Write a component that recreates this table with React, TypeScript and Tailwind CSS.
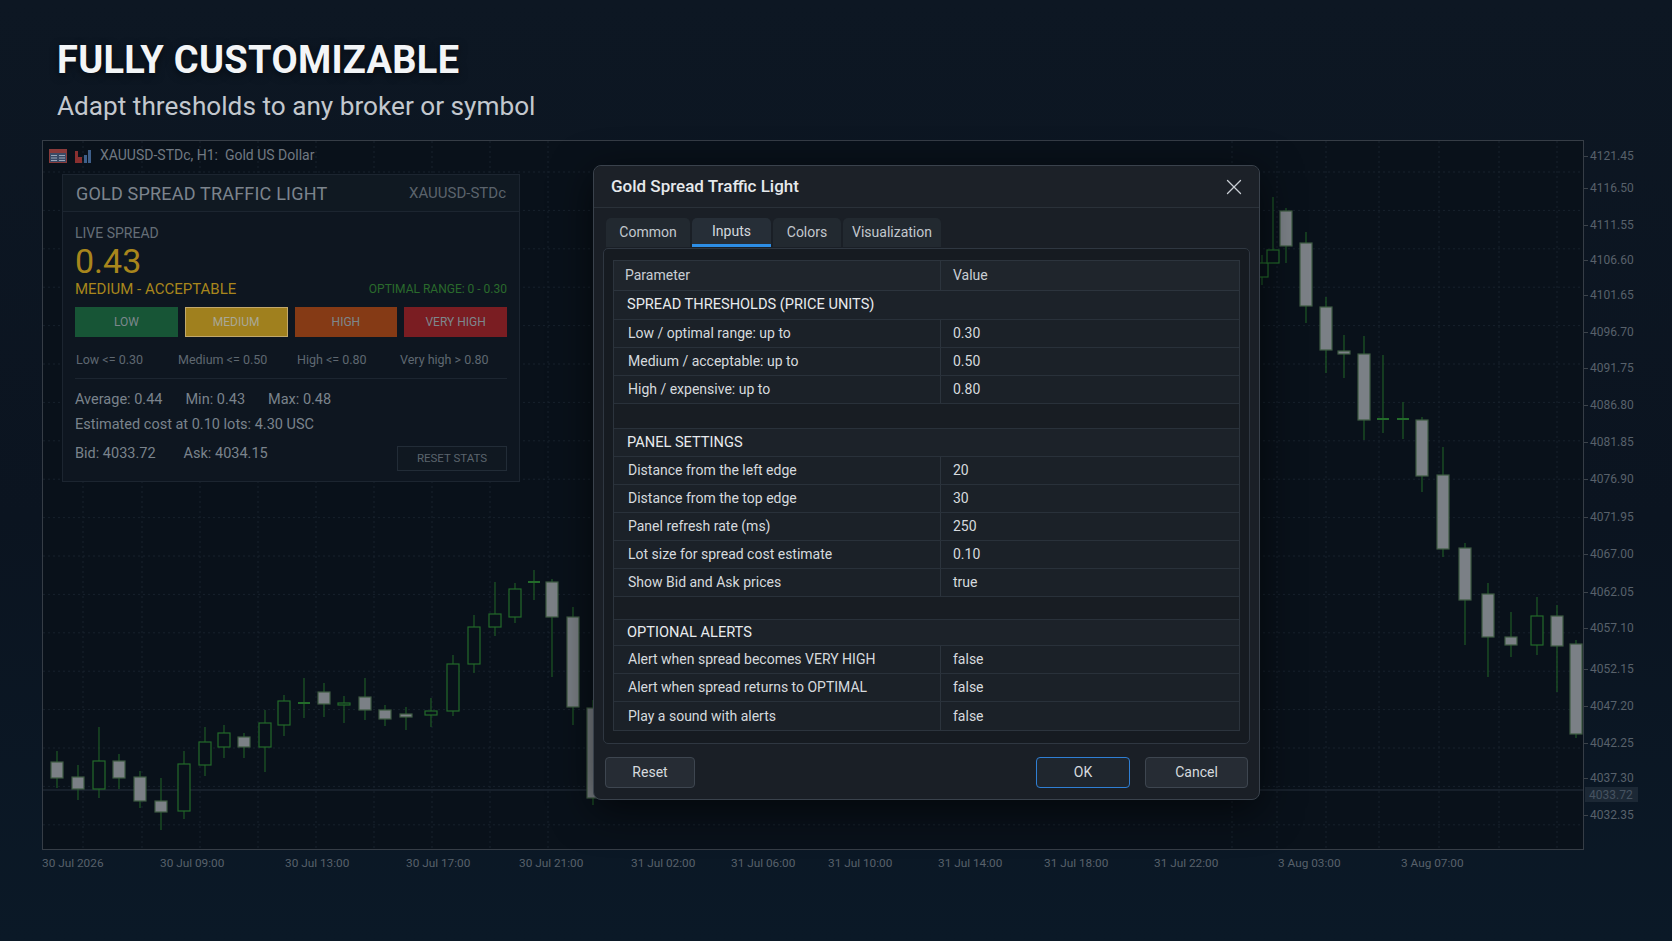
import React from "react";
import { X } from "lucide-react";

// candles: x, body top, body bottom, wick top, wick bottom, hollow (bull)
const candles: [number, number, number, number, number, number][] = [
  [57, 762, 778, 751, 788, 0],
  [78, 777, 789, 765, 800, 0],
  [99, 761, 789, 727, 798, 1],
  [119, 761, 778, 754, 789, 0],
  [140, 777, 801, 771, 808, 0],
  [161, 801, 812, 778, 830, 0],
  [184, 764, 811, 751, 819, 1],
  [205, 742, 765, 727, 776, 1],
  [224, 733, 747, 725, 758, 1],
  [244, 737, 747, 733, 758, 0],
  [265, 723, 747, 710, 772, 1],
  [284, 701, 725, 695, 736, 1],
  [304, 703, 703, 678, 718, 1],
  [324, 692, 704, 683, 717, 0],
  [344, 703, 705, 696, 723, 1],
  [365, 697, 710, 678, 720, 0],
  [385, 710, 719, 705, 726, 0],
  [406, 714, 717, 707, 730, 0],
  [431, 711, 715, 698, 727, 1],
  [453, 664, 711, 655, 716, 1],
  [474, 627, 664, 615, 673, 1],
  [495, 614, 627, 582, 636, 1],
  [515, 589, 617, 583, 623, 1],
  [534, 582, 582, 570, 600, 1],
  [552, 582, 617, 579, 677, 0],
  [573, 617, 707, 607, 725, 0],
  [593, 708, 798, 700, 805, 0],
  [1262, 263, 277, 255, 285, 1],
  [1273, 250, 263, 197, 263, 1],
  [1286, 211, 246, 208, 263, 0],
  [1306, 243, 306, 232, 323, 0],
  [1326, 307, 350, 297, 373, 0],
  [1344, 351, 354, 335, 378, 0],
  [1364, 354, 420, 336, 440, 0],
  [1383, 419, 419, 355, 433, 1],
  [1403, 419, 419, 402, 439, 1],
  [1422, 420, 476, 417, 492, 0],
  [1443, 475, 549, 447, 557, 0],
  [1465, 548, 600, 543, 645, 0],
  [1488, 594, 637, 583, 677, 0],
  [1511, 637, 645, 612, 657, 0],
  [1537, 616, 645, 597, 655, 1],
  [1557, 616, 646, 605, 692, 0],
  [1576, 644, 734, 640, 738, 0],
];

const vGrid = [83, 142, 200, 258, 316, 374, 432, 490, 548, 1232, 1277, 1326, 1379, 1439, 1499, 1557];
const hGrid = Array.from({ length: 18 }, (_, i) => 172 + i * 38.4);

const prices: [string, number][] = [
  ["4121.45", 156],
  ["4116.50", 188],
  ["4111.55", 225],
  ["4106.60", 260],
  ["4101.65", 295],
  ["4096.70", 332],
  ["4091.75", 368],
  ["4086.80", 405],
  ["4081.85", 442],
  ["4076.90", 479],
  ["4071.95", 517],
  ["4067.00", 554],
  ["4062.05", 592],
  ["4057.10", 628],
  ["4052.15", 669],
  ["4047.20", 706],
  ["4042.25", 743],
  ["4037.30", 778],
  ["4032.35", 815],
];

const times: [string, number][] = [
  ["30 Jul 2026", 42],
  ["30 Jul 09:00", 160],
  ["30 Jul 13:00", 285],
  ["30 Jul 17:00", 406],
  ["30 Jul 21:00", 519],
  ["31 Jul 02:00", 631],
  ["31 Jul 06:00", 731],
  ["31 Jul 10:00", 828],
  ["31 Jul 14:00", 938],
  ["31 Jul 18:00", 1044],
  ["31 Jul 22:00", 1154],
  ["3 Aug 03:00", 1278],
  ["3 Aug 07:00", 1401],
];

type Row =
  | { kind: "section"; label: string; h: number }
  | { kind: "empty"; h: number }
  | { kind: "row"; label: string; value: string; h: number };

const rows: Row[] = [
  { kind: "section", label: "SPREAD THRESHOLDS (PRICE UNITS)", h: 29 },
  { kind: "row", label: "Low / optimal range: up to", value: "0.30", h: 28 },
  { kind: "row", label: "Medium / acceptable: up to", value: "0.50", h: 28 },
  { kind: "row", label: "High / expensive: up to", value: "0.80", h: 28 },
  { kind: "empty", h: 25 },
  { kind: "section", label: "PANEL SETTINGS", h: 28 },
  { kind: "row", label: "Distance from the left edge", value: "20", h: 28 },
  { kind: "row", label: "Distance from the top edge", value: "30", h: 28 },
  { kind: "row", label: "Panel refresh rate (ms)", value: "250", h: 28 },
  { kind: "row", label: "Lot size for spread cost estimate", value: "0.10", h: 28 },
  { kind: "row", label: "Show Bid and Ask prices", value: "true", h: 28 },
  { kind: "empty", h: 23 },
  { kind: "section", label: "OPTIONAL ALERTS", h: 26 },
  { kind: "row", label: "Alert when spread becomes VERY HIGH", value: "false", h: 28 },
  { kind: "row", label: "Alert when spread returns to OPTIMAL", value: "false", h: 28 },
  { kind: "row", label: "Play a sound with alerts", value: "false", h: 28 },
];

function CandleChart() {
  return (
    <svg className="absolute inset-0" width="1540" height="708" viewBox="43 141 1540 708">
      {hGrid.map((y) => (
        <line key={"h" + y} x1="43" x2="1583" y1={y} y2={y} stroke="#18222d" strokeDasharray="2 3" />
      ))}
      {vGrid.map((x) => (
        <line key={"v" + x} x1={x} x2={x} y1="141" y2="849" stroke="#18222d" strokeDasharray="2 3" />
      ))}
      <line x1="43" x2="1583" y1="790" y2="790" stroke="#27313c" />
      {candles.map(([x, bt, bb, wt, wb, bull], i) => (
        <g key={i}>
          <line x1={x} x2={x} y1={wt} y2={wb} stroke="#1e5a25" strokeWidth="1.2" />
          {bt === bb ? (
            <line x1={x - 6} x2={x + 6} y1={bt} y2={bt} stroke={bull ? "#236b2a" : "#7b8086"} strokeWidth="2" />
          ) : (
            <rect
              x={x - 6}
              y={bt}
              width="12"
              height={bb - bt}
              fill={bull ? "#09111a" : "#7b8086"}
              stroke={bull ? "#236b2a" : "#3d5a42"}
              strokeWidth="1.2"
            />
          )}
        </g>
      ))}
    </svg>
  );
}

function TableIcon() {
  return (
    <svg width="18" height="14" viewBox="0 0 18 14">
      <rect x="0.5" y="0.5" width="17" height="13" fill="#3a4a66" stroke="#8a3a3a" />
      <rect x="1" y="1" width="16" height="3" fill="#8a3a3a" />
      <line x1="2" x2="8" y1="6.5" y2="6.5" stroke="#9aa6b8" />
      <line x1="10" x2="16" y1="6.5" y2="6.5" stroke="#9aa6b8" />
      <line x1="2" x2="8" y1="9" y2="9" stroke="#9aa6b8" />
      <line x1="10" x2="16" y1="9" y2="9" stroke="#9aa6b8" />
      <line x1="2" x2="8" y1="11.5" y2="11.5" stroke="#9aa6b8" />
      <line x1="10" x2="16" y1="11.5" y2="11.5" stroke="#9aa6b8" />
    </svg>
  );
}

function BarsIcon() {
  return (
    <svg width="16" height="14" viewBox="0 0 16 14">
      <rect x="0" y="2" width="3" height="12" fill="#8a3030" />
      <rect x="3" y="8" width="4" height="6" fill="#8a3030" />
      <rect x="9" y="6" width="3" height="8" fill="#3e5f8a" />
      <rect x="13" y="1" width="3" height="13" fill="#3e5f8a" />
    </svg>
  );
}

function InfoPanel() {
  return (
    <div className="absolute left-[19px] top-[33px] w-[458px] h-[308px] bg-[#0e1620] border border-[#1c2530] flex flex-col">
      <div className="h-[37px] px-[13px] flex items-center justify-between border-b border-[#1c2530] bg-[#101922]">
        <span className="text-[18px] text-[#7c848d] tracking-[0.2px]">GOLD SPREAD TRAFFIC LIGHT</span>
        <span className="text-[15px] text-[#5b636c]">XAUUSD-STDc</span>
      </div>
      <div className="px-[12px] flex flex-col">
        <div className="mt-[13px] text-[14px] leading-[16px] text-[#656e77]">LIVE SPREAD</div>
        <div className="mt-[2px] text-[34px] leading-[36px] text-[#a8861c]">0.43</div>
        <div className="mt-[1px] flex items-end justify-between leading-[18px]">
          <span className="text-[15px] text-[#a8861c]">MEDIUM - ACCEPTABLE</span>
          <span className="text-[12px] text-[#2a6a2c]">OPTIMAL RANGE: 0 - 0.30</span>
        </div>
        <div className="mt-[9px] grid grid-cols-4 gap-[7px] h-[30px] text-[12px] text-[#7d878d]">
          <div className="bg-[#175536] flex items-center justify-center">LOW</div>
          <div className="bg-[#a0801e] border border-[#c2a86a] text-[#a9a896] flex items-center justify-center">MEDIUM</div>
          <div className="bg-[#853a15] flex items-center justify-center">HIGH</div>
          <div className="bg-[#7a1d22] flex items-center justify-center">VERY HIGH</div>
        </div>
        <div className="mt-[15px] flex text-[12.5px] leading-[16px] text-[#5f6871]">
          <span className="w-[103px] pl-[1px]">Low &lt;= 0.30</span>
          <span className="w-[119px]">Medium &lt;= 0.50</span>
          <span className="w-[103px]">High &lt;= 0.80</span>
          <span>Very high &gt; 0.80</span>
        </div>
        <div className="mt-[10px] border-t border-[#1c2530]" />
        <div className="mt-[12px] flex gap-[23px] text-[14.5px] leading-[18px] text-[#7a838c]">
          <span>Average: 0.44</span>
          <span>Min: 0.43</span>
          <span>Max: 0.48</span>
        </div>
        <div className="mt-[7px] text-[14.5px] leading-[18px] text-[#7a838c]">Estimated cost at 0.10 lots: 4.30 USC</div>
        <div className="mt-[11px] flex items-start justify-between">
          <div className="flex gap-[28px] text-[14.5px] leading-[18px] text-[#7a838c]">
            <span>Bid: 4033.72</span>
            <span>Ask: 4034.15</span>
          </div>
          <div className="mt-[1px] w-[110px] h-[25px] border border-[#222c37] bg-[#101821] flex items-center justify-center text-[11.5px] text-[#5b646d]">
            RESET STATS
          </div>
        </div>
      </div>
    </div>
  );
}

function Dialog() {
  const tabs = [
    { label: "Common", w: 84 },
    { label: "Inputs", w: 79, active: true },
    { label: "Colors", w: 68 },
    { label: "Visualization", w: 98 },
  ];
  return (
    <div className="absolute left-[550px] top-[24px] w-[667px] h-[635px] rounded-[8px] border border-[#3a424c] bg-[#1a1f26] shadow-[0_10px_40px_rgba(0,0,0,0.6)] flex flex-col">
      <div className="h-[42px] shrink-0 pl-[17px] pr-[12px] flex items-center justify-between border-b border-[#2a3139] rounded-t-[8px] bg-[#1c2128]">
        <span className="text-[17px] font-medium text-[#e6e9ec]">Gold Spread Traffic Light</span>
        <X className="w-[26px] h-[26px] text-[#c9ced4]" strokeWidth={1.2} />
      </div>
      <div className="pt-[10px] pl-[12px] flex gap-[2px]">
        {tabs.map((t) => (
          <div
            key={t.label}
            style={{ width: t.w }}
            className={
              t.active
                ? "h-[29px] rounded-t-[5px] bg-[#262e37] border-b-[3px] border-[#2d8ee6] flex items-center justify-center text-[14px] text-[#d3d8de]"
                : "h-[29px] rounded-t-[5px] bg-[#222930] flex items-center justify-center text-[14px] text-[#c2c8ce]"
            }
          >
            {t.label}
          </div>
        ))}
      </div>
      <div className="mx-[9px] mt-[1px] h-[496px] rounded-[5px] border border-[#2f3741] bg-[#161b21] pt-[11px] px-[9px]">
        <div className="border border-[#2c343d] text-[14px] text-[#d6dade]">
          <div className="h-[30px] flex bg-[#1f252c] border-b border-[#2c343d] text-[#c9ced4]">
            <div className="w-[327px] border-r border-[#2c343d] pl-[11px] flex items-center">Parameter</div>
            <div className="flex-1 pl-[12px] flex items-center">Value</div>
          </div>
          {rows.map((r, i) => {
            const last = i === rows.length - 1;
            const bb = last ? "" : " border-b border-[#29313a]";
            if (r.kind === "section")
              return (
                <div
                  key={i}
                  style={{ height: r.h }}
                  className={"flex items-center pl-[13px] bg-[#1c2229] text-[14.6px] text-[#e8ebee]" + bb}
                >
                  {r.label}
                </div>
              );
            if (r.kind === "empty") return <div key={i} style={{ height: r.h }} className={"bg-[#181d23]" + bb} />;
            return (
              <div key={i} style={{ height: r.h }} className={"flex bg-[#1b2128]" + bb}>
                <div className="w-[327px] border-r border-[#2c343d] pl-[14px] flex items-center">{r.label}</div>
                <div className="flex-1 pl-[12px] flex items-center">{r.value}</div>
              </div>
            );
          })}
        </div>
      </div>
      <div className="mt-[13px] px-[11px] flex justify-between text-[14px] text-[#d6dade]">
        <div className="w-[90px] h-[31px] rounded-[4px] border border-[#3e4650] bg-[#262c34] flex items-center justify-center">Reset</div>
        <div className="flex gap-[15px]">
          <div className="w-[94px] h-[31px] rounded-[4px] border border-[#2f7fd4] bg-[#1f262e] flex items-center justify-center">OK</div>
          <div className="w-[103px] h-[31px] rounded-[4px] border border-[#3e4650] bg-[#262c34] flex items-center justify-center">Cancel</div>
        </div>
      </div>
    </div>
  );
}

export default function App() {
  return (
    <div className="w-[1672px] h-[941px] overflow-hidden bg-[linear-gradient(180deg,#0d1723_0%,#0b1420_55%,#0b1927_100%)] font-['Roboto',sans-serif]">
      <div className="pl-[57px] pt-[38px]">
        <h1 className="text-[38px] leading-[45px] font-bold text-[#f3f5f7] tracking-[0.3px] [text-shadow:0_2px_8px_rgba(0,0,0,0.6)]">
          FULLY CUSTOMIZABLE
        </h1>
        <p className="mt-[6px] text-[26.2px] leading-[34px] text-[#c3c8ce]">Adapt thresholds to any broker or symbol</p>
      </div>

      <div className="mt-[17px] flex">
        <div className="ml-[42px] relative w-[1542px] h-[710px] border border-[#363d46] bg-[#09111a]">
          <CandleChart />
          <div className="absolute left-[6px] top-[4px] flex items-center">
            <TableIcon />
            <span className="ml-[8px]">
              <BarsIcon />
            </span>
            <span className="ml-[9px] text-[14px] text-[#717982]">XAUUSD-STDc, H1:&nbsp;&nbsp;Gold US Dollar</span>
          </div>
          <InfoPanel />
          <Dialog />
        </div>
        <div className="relative w-[88px] h-[710px] text-[12px] text-[#58616b]">
          {prices.map(([p, y]) => (
            <div key={p} className="absolute left-0 flex items-center h-[14px]" style={{ top: y - 140 - 7 }}>
              <span className="w-[4px] h-px bg-[#3b424a]" />
              <span className="ml-[2px]">{p}</span>
            </div>
          ))}
          <div className="absolute left-[1px] top-[647px] w-[53px] h-[15px] bg-[#1c2835] text-[#465361] flex items-center pl-[4px]">
            4033.72
          </div>
        </div>
      </div>

      <div className="ml-[42px] relative w-[1542px] h-[30px] text-[11.8px] text-[#58616b]">
        {times.map(([t, x]) => (
          <span key={t} className="absolute top-[5px]" style={{ left: x - 42 }}>
            {t}
          </span>
        ))}
      </div>
    </div>
  );
}
